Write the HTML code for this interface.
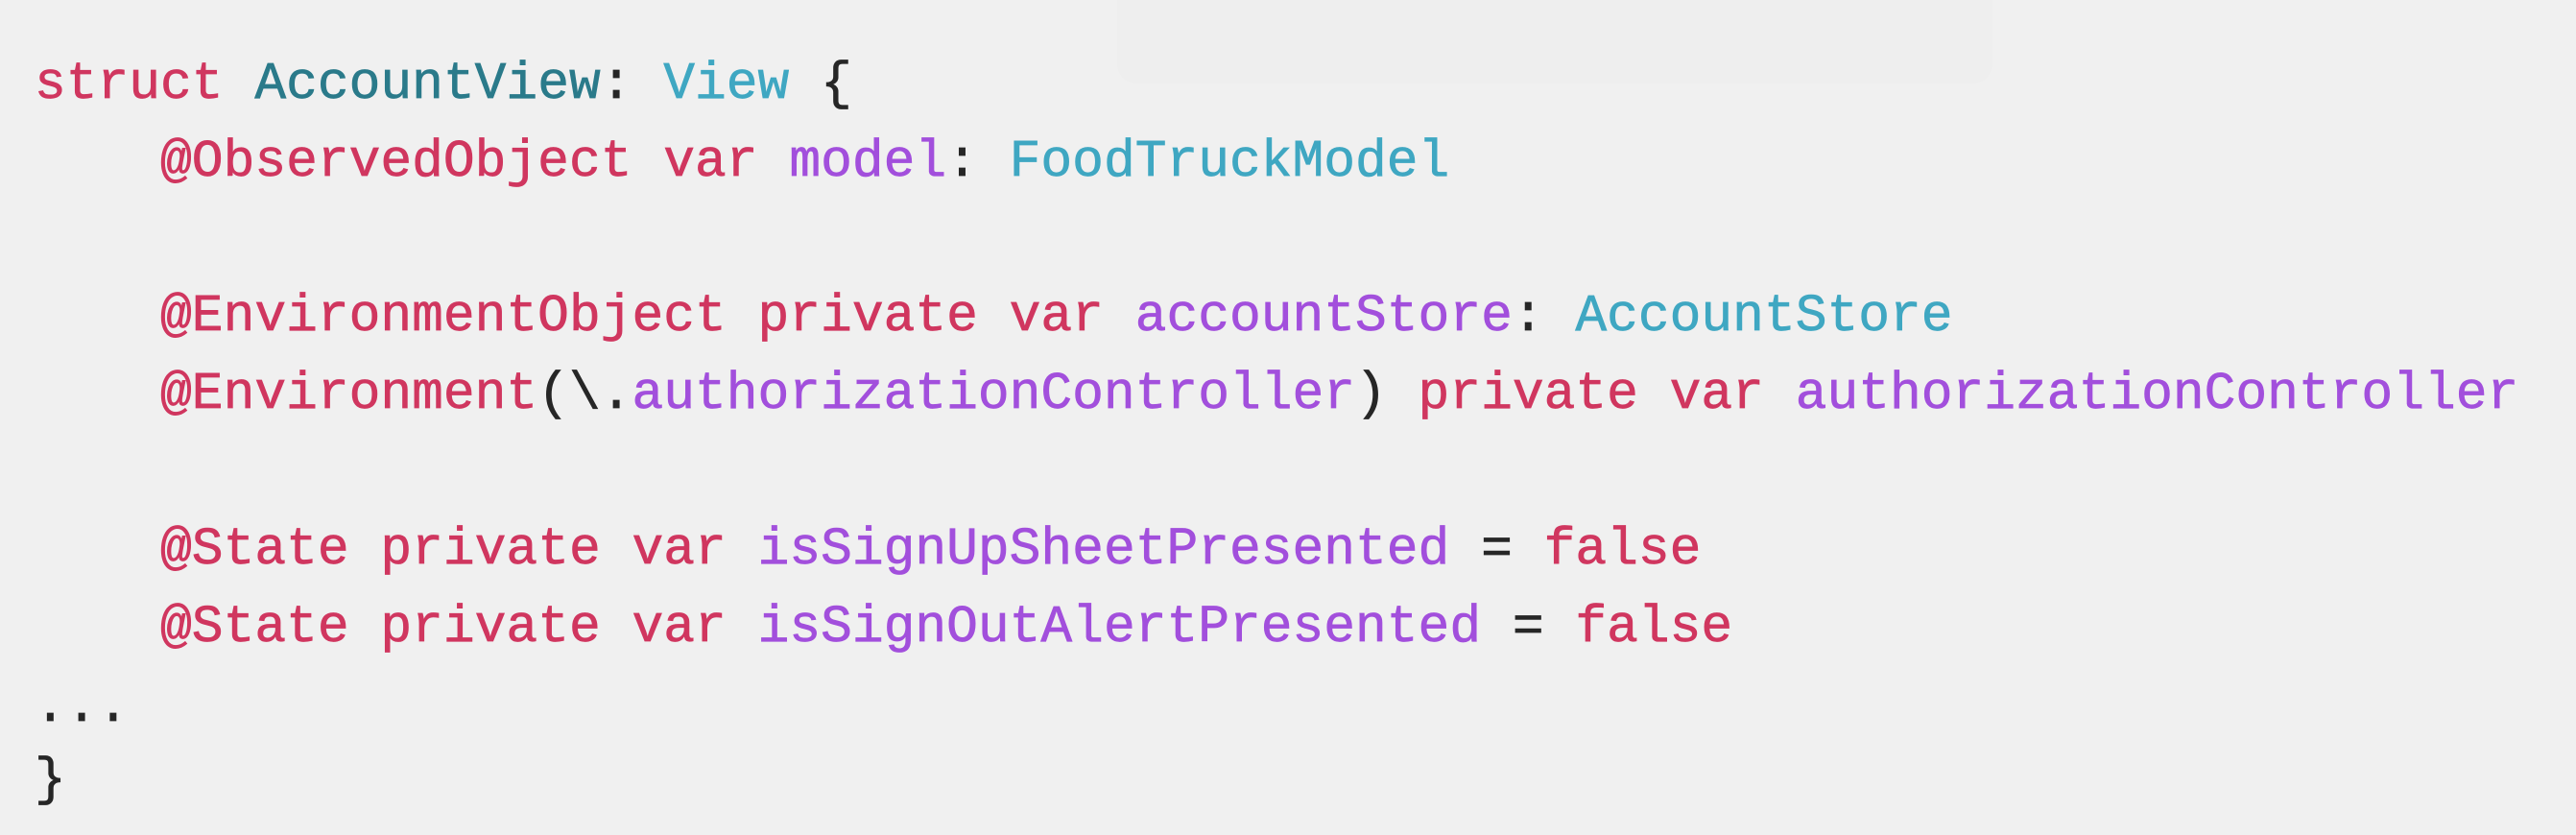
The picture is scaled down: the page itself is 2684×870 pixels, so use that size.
<!DOCTYPE html>
<html><head><meta charset="utf-8"><style>
html,body{margin:0;padding:0;}
body{width:2684px;height:870px;background:#f0f0f0;position:relative;overflow:hidden;
font-family:"Liberation Mono",monospace;font-size:54.6px;}
.l{position:absolute;left:36px;height:81px;line-height:81px;white-space:pre;color:#262626;-webkit-text-stroke:0.7px currentColor;}
.k{color:#d0365f}.t{color:#2a7a8a}.y{color:#3fa7c2}.p{color:#a24fdc}
.box{position:absolute;left:1164px;top:-20px;width:912px;height:107px;border-radius:20px;background:#eeeeee;}
</style></head><body>
<div class="box"></div>
<div class="l" style="top:48px"><span class="k">struct</span> <span class="t">AccountView</span>: <span class="y">View</span> {</div>
<div class="l" style="top:129px">    <span class="k">@ObservedObject</span> <span class="k">var</span> <span class="p">model</span>: <span class="y">FoodTruckModel</span></div>
<div class="l" style="top:290px">    <span class="k">@EnvironmentObject</span> <span class="k">private</span> <span class="k">var</span> <span class="p">accountStore</span>: <span class="y">AccountStore</span></div>
<div class="l" style="top:371px">    <span class="k">@Environment</span>(\.<span class="p">authorizationController</span>) <span class="k">private</span> <span class="k">var</span> <span class="p">authorizationController</span></div>
<div class="l" style="top:533px">    <span class="k">@State</span> <span class="k">private</span> <span class="k">var</span> <span class="p">isSignUpSheetPresented</span> = <span class="k">false</span></div>
<div class="l" style="top:614px">    <span class="k">@State</span> <span class="k">private</span> <span class="k">var</span> <span class="p">isSignOutAlertPresented</span> = <span class="k">false</span></div>
<div class="l" style="top:697px">...</div>
<div class="l" style="top:773px">}</div>
</body></html>
